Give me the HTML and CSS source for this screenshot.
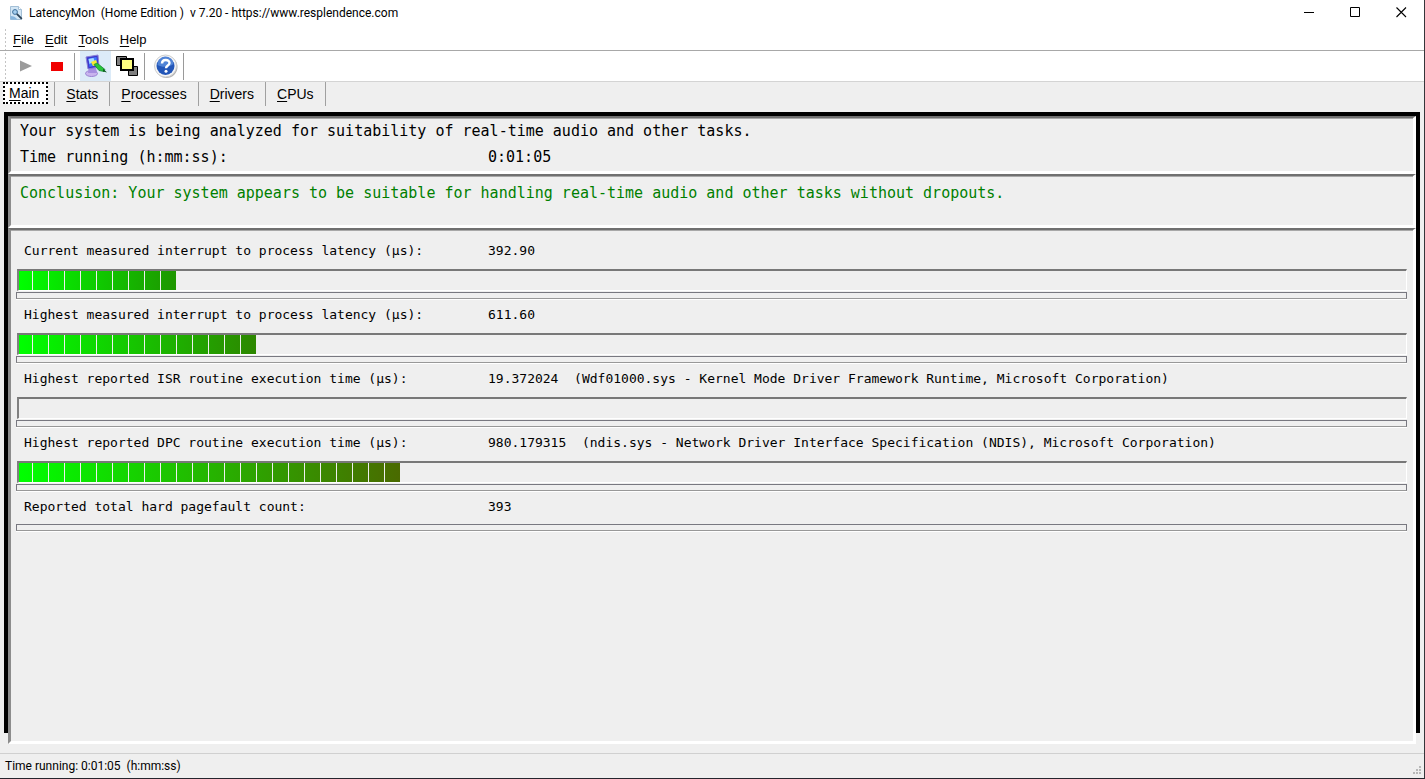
FILE: index.html
```
<!DOCTYPE html>
<html lang="en">
<head>
<meta charset="utf-8">
<title>LatencyMon</title>
<link rel="stylesheet" href="styles.css">
</head>
<body>
<div class="window">
  <header class="titlebar">
    <svg class="app-icon" width="16" height="16" viewBox="0 0 16 16" aria-hidden="true">
      <path d="M2.500 1.500h8l3 3v10h-11z" fill="#d3e6f5" stroke="#a3bfd6"/>
      <path d="M10.500 1.500v3h3" fill="#fff" stroke="#a3bfd6"/>
      <path d="M2.500 11c3 0 5 1 7 3.500h-7z" fill="#86b4dc"/>
      <circle cx="7" cy="7" r="2.400" fill="#a8cfee" stroke="#3d6f9b"/>
      <path d="M8.800 8.800l5 5" stroke="#2a4156" stroke-width="1.800"/>
    </svg>
    <h1 class="title">LatencyMon&nbsp; (Home Edition )&nbsp; v 7.20 - https://www.resplendence.com</h1>
    <div class="caption">
      <button class="caption-btn" aria-label="Minimize"><svg width="11" height="11" viewBox="0 0 11 11"><path d="M0 5.500h10" stroke="#000"/></svg></button>
      <button class="caption-btn" aria-label="Maximize"><svg width="11" height="11" viewBox="0 0 11 11"><path d="M.5.5h9v9h-9z" fill="none" stroke="#000"/></svg></button>
      <button class="caption-btn" aria-label="Close"><svg width="11" height="11" viewBox="0 0 11 11"><path d="M.5.5l9.500 9.500M10 .5l-9.500 9.500" stroke="#000" stroke-width="1.100"/></svg></button>
    </div>
  </header>

  <div class="bars">
    <nav class="menu">
      <button class="menu-item"><u>F</u>ile</button>
      <button class="menu-item"><u>E</u>dit</button>
      <button class="menu-item"><u>T</u>ools</button>
      <button class="menu-item"><u>H</u>elp</button>
    </nav>
    <div class="toolbar">
      <button class="tool" aria-label="Start"><svg width="24" height="24" viewBox="0 0 24 24"><path d="M6 6.500l12 5.500-12 5.500z" fill="#9b9b9b"/></svg></button>
      <button class="tool" aria-label="Stop"><svg width="24" height="24" viewBox="0 0 24 24"><path d="M6 8h12v9H6z" fill="#f00000"/></svg></button>
      <span class="sep"></span>
      <button class="tool tool-active" aria-label="Options"><svg width="24" height="24" viewBox="0 0 24 24">
        <ellipse cx="7.500" cy="19.500" rx="6" ry="3" fill="#c9b4ee" stroke="#9a82d2"/>
        <path d="M5 13h7l1 6H4z" fill="#a68fe0"/>
        <path d="M2 3l12-2 1 12-11 2z" fill="#3c38cc" stroke="#8a80d8"/>
        <path d="M4.500 4.500l8-1.500 1 8-8 2z" fill="#3e78ff"/>
        <path d="M4.500 5l5-1 1 3-5 3z" fill="#a9dcff"/>
        <path d="M7 8l5-2 2 5-5 1z" fill="#f8ea32"/>
        <path d="M10 10.500l3-1.500 8 6.500-1 2-5-1z" fill="#27c53a" stroke="#1a8a38" stroke-width=".8"/>
        <path d="M19 14.500l4 4-4-1z" fill="#125f23"/>
      </svg></button>
      <button class="tool" aria-label="Windows"><svg width="24" height="24" viewBox="0 0 24 24">
        <path d="M1.500 2.500h10v9h-10zM13.500 12.500h9v9h-9z" fill="#808080" stroke="#000"/>
        <path d="M6 5h12v11H6z" fill="#ffff80" stroke="#000" stroke-width="2"/>
      </svg></button>
      <span class="sep"></span>
      <button class="tool" aria-label="Help"><svg width="24" height="24" viewBox="0 0 24 24">
        <circle cx="12.500" cy="13" r="11" fill="#b4b4b4"/>
        <circle cx="11.500" cy="12" r="11" fill="#f5f5f5" stroke="#cfcfcf"/>
        <circle cx="11.500" cy="12" r="9" fill="#2356b8"/>
        <path d="M3.500 11a8 8 0 0 1 16-1c-4 3-11 4-16 1z" fill="#5083d6"/>
        <path d="M8 9.500c0-4.500 7.500-4.500 7.500-.5 0 2.500-3.500 2.500-3.500 5.200" fill="none" stroke="#fff" stroke-width="2.400"/>
        <circle cx="12" cy="17.300" r="1.500" fill="#fff"/>
      </svg></button>
      <span class="sep"></span>
    </div>
  </div>

  <nav class="tabs">
    <button class="tab tab-current"><u>M</u>ain</button>
    <button class="tab"><u>S</u>tats</button>
    <button class="tab"><u>P</u>rocesses</button>
    <button class="tab"><u>D</u>rivers</button>
    <button class="tab tab-last"><u>C</u>PUs</button>
  </nav>

  <main class="frame">
    <section class="panel summary">
      <p class="line">Your system is being analyzed for suitability of real-time audio and other tasks.</p>
      <p class="line pair"><span>Time running (h:mm:ss):</span><span>0:01:05</span></p>
    </section>
    <section class="panel conclusion">
      <p class="line">Conclusion: Your system appears to be suitable for handling real-time audio and other tasks without dropouts.</p>
    </section>
    <section class="panel metrics">
      <div class="metric">
        <p class="pair reading"><span>Current measured interrupt to process latency (µs):</span><span>392.90</span></p>
        <div class="meter"><div class="fill fill-low" style="width:157px"></div></div>
        <div class="rule"></div>
      </div>
      <div class="metric">
        <p class="pair reading"><span>Highest measured interrupt to process latency (µs):</span><span>611.60</span></p>
        <div class="meter"><div class="fill fill-mid" style="width:237px"></div></div>
        <div class="rule"></div>
      </div>
      <div class="metric">
        <p class="pair reading"><span>Highest reported ISR routine execution time (µs):</span><span>19.372024&nbsp; (Wdf01000.sys - Kernel Mode Driver Framework Runtime, Microsoft Corporation)</span></p>
        <div class="meter"></div>
        <div class="rule"></div>
      </div>
      <div class="metric">
        <p class="pair reading"><span>Highest reported DPC routine execution time (µs):</span><span>980.179315&nbsp; (ndis.sys - Network Driver Interface Specification (NDIS), Microsoft Corporation)</span></p>
        <div class="meter"><div class="fill fill-high" style="width:381px"></div></div>
        <div class="rule"></div>
      </div>
      <div class="metric">
        <p class="pair reading reading-plain"><span>Reported total hard pagefault count:</span><span>393</span></p>
        <div class="rule"></div>
      </div>
    </section>
  </main>

  <footer class="status">
    <span>Time running: 0:01:05&nbsp; (h:mm:ss)</span>
    <svg class="grip" width="11" height="11" viewBox="0 0 11 11" aria-hidden="true"><path d="M6 0h2v2H6zM6 3h2v2H6zM3 3h2v2H3zM6 6h2v2H6zM3 6h2v2H3zM0 6h2v2H0z" fill="#b8b8b8"/></svg>
  </footer>
</div>
</body>
</html>
```
FILE: styles.css
```
* { box-sizing: border-box; }
body { margin: 0; background: #efefef; color: #000; font-family: Roboto, "Noto Sans", sans-serif; }
p, h1 { margin: 0; font-weight: normal; }
button { margin: 0; padding: 0; border: 0; background: none; color: inherit; font: inherit; }
u { text-underline-offset: 2px; }

.window {
  display: flex;
  flex-direction: column;
  min-height: 100vh;
  border-right: 1px solid #35353a;
  border-bottom: 1px solid #25252d;
}

.titlebar { display: flex; align-items: center; height: 25px; padding-left: 8px; background: #fff; }
.title { flex: 1; margin-left: 5px; font-size: 12px; line-height: 24px; }
.caption { display: flex; align-self: stretch; }
.caption-btn { display: flex; align-items: center; justify-content: center; width: 46px; }

.bars {
  background:
    repeating-linear-gradient(#c4c4c4 0 2px, transparent 2px 4px) 5px 4px / 1px 100% no-repeat,
    #fff;
  border-bottom: 1px solid #d4d4d4;
}
.menu { display: flex; gap: 11px; height: 26px; padding: 3px 0 0 13px; border-bottom: 1px solid #a8a8a8; font: 13px "Liberation Sans", Arial, sans-serif; }
.toolbar { display: flex; align-items: center; height: 30px; padding-left: 10px; }
.tool { display: flex; align-items: center; justify-content: center; width: 31px; height: 30px; }
.tool-active { background: #dcebf8; }
.sep { width: 1px; height: 27px; margin: 0 5px 0 2px; background: #9a9a9a; }

.tabs { display: flex; height: 24px; margin-bottom: 6px; padding-left: 3px; font: 14px "Liberation Sans", Arial, sans-serif; }
.tab { height: 24px; padding: 0 11px; border-left: 1px solid #a0a0a0; }
.tab-last { border-right: 1px solid #a0a0a0; }
.tab-current { height: 22px; margin-right: 6px; padding: 0 7px 0 4px; border: 2px dotted #000; background: #fff; }

.frame {
  flex: 1;
  display: flex;
  flex-direction: column;
  margin: 0 4px 9px;
  padding: 4px 4px 0;
  background: linear-gradient(#000, #000) top / 100% calc(100% - 11px) no-repeat;
}
.panel {
  background: #efefef;
  border: solid;
  border-width: 2px 3px 3px;
  border-color: #707070 #fff #fff #8c8c8c;
  box-shadow: inset 0 1px #a8a8a8;
  font-family: "DejaVu Sans Mono", "Liberation Mono", monospace;
}
.line { line-height: 26px; }
.summary { padding: 0 0 1px 9px; font-size: 15px; }
.conclusion { min-height: 54px; padding: 4px 0 0 9px; color: #008000; font-size: 15px; }
.metrics { flex: 1; padding: 5px 6px 0 5px; font-size: 13px; }

.pair { display: grid; grid-template-columns: 468px 1fr; }
.reading { grid-template-columns: 464px 1fr; height: 34px; padding-left: 8px; line-height: 32px; }
.reading-plain { height: 32px; }
.meter { height: 22px; margin-left: 1px; border: solid; border-width: 2px 1px 1px 2px; border-color: #787878 #fff #fff #808080; }
.fill {
  --ticks: linear-gradient(90deg, #efefef 1px, transparent 1px) 13px 0 / 16px 100%;
  height: 19px;
}
.fill-low { background: var(--ticks), linear-gradient(90deg, #00ff00, #1e9600); }
.fill-mid { background: var(--ticks), linear-gradient(90deg, #00ff00, #2d8700); }
.fill-high { background: var(--ticks), linear-gradient(90deg, #00ff00, #4a6a00); }
.rule { height: 7px; margin-top: 1px; border: 1px solid #787880; border-bottom-color: #989898; box-shadow: 0 1px #fff; }

.status { display: flex; justify-content: space-between; align-items: center; height: 25px; padding-left: 5px; border-top: 1px solid #d0d0d0; font-size: 12px; }
.grip { align-self: flex-end; margin-bottom: 1px; }
```
